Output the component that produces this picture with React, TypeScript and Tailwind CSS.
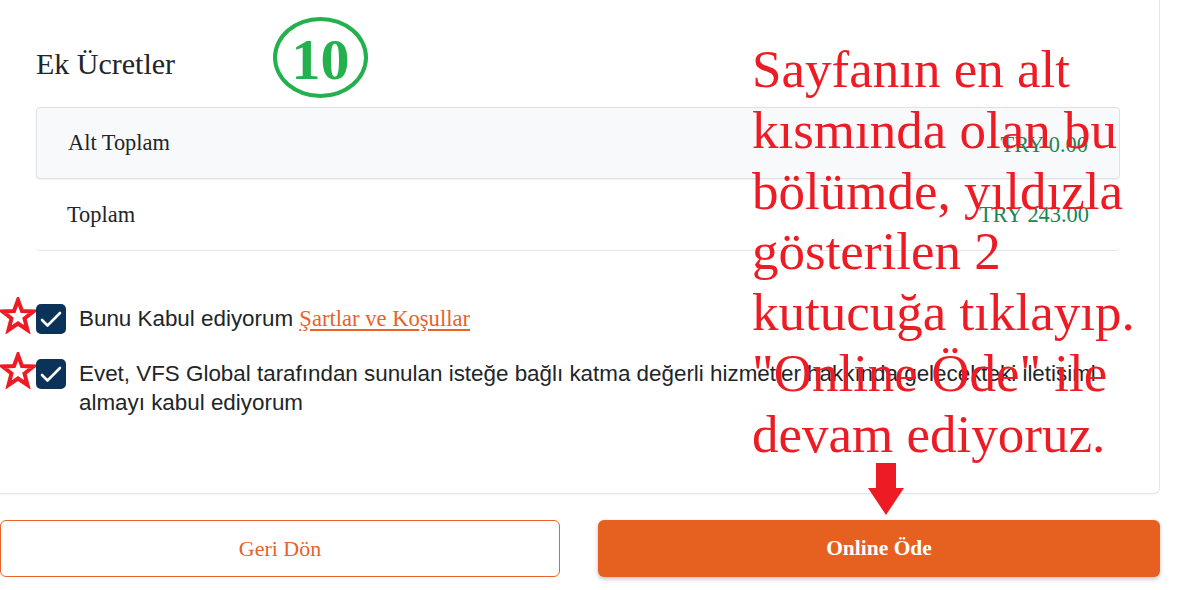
import React from "react";

const serif = { fontFamily: '"Liberation Serif", "Times New Roman", serif' };

function Star() {
  return (
    <svg width="36" height="37" viewBox="0 0 36 37" className="absolute left-[-36px] top-[-7px]">
      <polygon
        points="18,3 22,14 33.5,14.5 24.5,21.5 27.5,33 18,26.5 8.5,33 11.5,21.5 2.5,14.5 14,14"
        fill="white"
        stroke="#ed1c24"
        strokeWidth="4"
        strokeLinejoin="miter"
      />
    </svg>
  );
}

function Check() {
  return (
    <div className="w-[30px] h-[30px] shrink-0 rounded-[5px] bg-[#0b3258] flex items-center justify-center">
      <svg width="30" height="30" viewBox="0 0 30 30">
        <polyline points="6,16 11.5,21.5 24,9" fill="none" stroke="white" strokeWidth="2.6" strokeLinecap="round" strokeLinejoin="round" />
      </svg>
    </div>
  );
}

export default function App() {
  return (
    <div className="relative w-[1180px] h-[590px] bg-white overflow-hidden" style={{ fontFamily: '"Liberation Sans", Arial, sans-serif' }}>
      <div className="w-[1160px] h-[494px] bg-white border-r border-b border-[#e1e5ea] rounded-br-[6px] shadow-[0_1px_2px_rgba(0,0,0,0.04)] pl-[36px] pr-[39px] pt-[46px] flex flex-col">
        <div className="text-[30px] leading-[36px] text-[#212529]" style={serif}>Ek Ücretler</div>
        <div className="mt-[25px] flex flex-col text-[22.4px] text-[#212529]" style={serif}>
          <div className="h-[72px] bg-[#f8f9fa] border border-[#dee2e6] rounded-[4px] shadow-[0_1px_1px_rgba(0,0,0,0.06)] flex items-center justify-between pl-[31px] pr-[31px]">
            <span>Alt Toplam</span>
            <span className="text-[#198754] pt-[4px]">TRY 0.00</span>
          </div>
          <div className="h-[72px] border-b border-[#e3e6ea] rounded-b-[4px] flex items-center justify-between pl-[31px] pr-[31px]">
            <span>Toplam</span>
            <span className="text-[#198754]">TRY 243.00</span>
          </div>
        </div>
        <div className="mt-[53px] flex flex-col gap-[25px] text-[22.4px] leading-[29px] text-[#212529]">
          <div className="relative flex items-start gap-[13px]">
            <Star />
            <Check />
            <div>
              Bunu Kabul ediyorum{" "}
              <span className="text-[#e8622a] text-[22.6px] underline underline-offset-[3px]" style={serif}>Şartlar ve Koşullar</span>
            </div>
          </div>
          <div className="relative flex items-start gap-[13px]">
            <Star />
            <Check />
            <div>
              Evet, VFS Global tarafından sunulan isteğe bağlı katma değerli hizmetler hakkında gelecekteki iletişimi almayı kabul ediyorum
            </div>
          </div>
        </div>
      </div>
      <div className="mt-[26px] flex gap-[38px] w-[1160px]" style={serif}>
        <button className="w-[560px] h-[57px] border border-[#e8622a] rounded-[6px] text-[#e8622a] text-[22px] bg-white">Geri Dön</button>
        <button className="w-[562px] h-[57px] rounded-[6px] bg-[#e6611f] text-white text-[21.5px] font-bold shadow-[0_2px_4px_rgba(0,0,0,0.25)]">Online Öde</button>
      </div>

      {/* annotation: green circled number */}
      <div className="absolute left-[273px] top-[17px] w-[95px] h-[81px] rounded-[50%] border-[4px] border-[#22b14c] flex items-center justify-center text-[#22b14c] text-[58px] font-bold leading-none" style={serif}>
        <span className="mt-[4px]">10</span>
      </div>

      {/* annotation: red text */}
      <div className="absolute left-[752px] top-[39px] text-[#ed1c24] text-[53px] leading-[60.8px] whitespace-nowrap" style={serif}>
        Sayfanın en alt<br />
        kısmında olan bu<br />
        bölümde, yıldızla<br />
        gösterilen 2<br />
        kutucuğa tıklayıp.<br />
        "Online Öde" ile<br />
        devam ediyoruz.
      </div>

      {/* annotation: red arrow */}
      <svg className="absolute left-[866px] top-[462px]" width="40" height="55" viewBox="0 0 40 55">
        <polygon points="10,1 30,1 30,26 38,26 20,53 2,26 10,26" fill="#ed1c24" />
      </svg>
    </div>
  );
}
